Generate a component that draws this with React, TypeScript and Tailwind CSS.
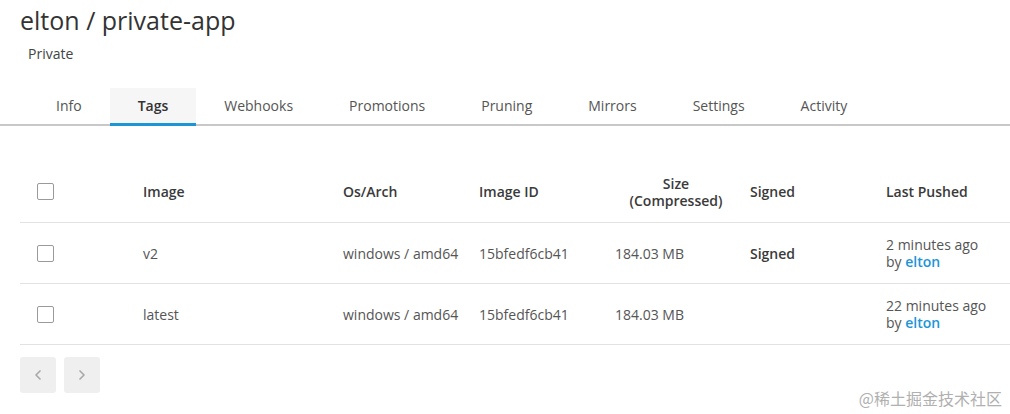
import { ChevronLeft, ChevronRight } from "lucide-react";

const TABS = ["Info", "Tags", "Webhooks", "Promotions", "Pruning", "Mirrors", "Settings", "Activity"];

type TagRow = {
  tag: string;
  osArch: string;
  imageId: string;
  size: string;
  signed: boolean;
  pushed: string;
  by: string;
};

const ROWS: TagRow[] = [
  { tag: "v2", osArch: "windows / amd64", imageId: "15bfedf6cb41", size: "184.03 MB", signed: true, pushed: "2 minutes ago", by: "elton" },
  { tag: "latest", osArch: "windows / amd64", imageId: "15bfedf6cb41", size: "184.03 MB", signed: false, pushed: "22 minutes ago", by: "elton" }
];

const gridCols = "grid grid-cols-[123px_200px_136px_136px_135px_136px_1fr] items-center";

function Checkbox() {
  return <span className="ml-[17px] block h-[17px] w-[17px] rounded-[2px] border border-[#9a9a9a] bg-white" />;
}

export default function App() {
  return (
    <div className="relative h-[414px] w-[1010px] overflow-hidden bg-white font-['Open_Sans',sans-serif] text-[#555]">
      <h1 className="pl-5 pt-[2px] text-[25px] leading-[36px] text-[#333]">elton / private-app</h1>
      <p className="mt-[6px] pl-7 text-[14px] leading-[20px] text-[#444]">Private</p>

      <div className="mt-[24px] flex border-b-2 border-[#c8c8c8] pl-7">
        {TABS.map((tab) => (
          <div
            key={tab}
            className={
              tab === "Tags"
                ? "-mb-[2px] border-b-[3px] border-[#1b95d8] bg-[#f6f6f6] px-7 pb-[5px] pt-[6px] text-[14px] font-semibold leading-[24px] text-[#333]"
                : "px-7 pb-[6px] pt-[6px] text-[14px] leading-[24px] text-[#555]"
            }
          >
            {tab}
          </div>
        ))}
      </div>

      <div className="ml-5 mt-[35px]">
        <div className={`${gridCols} h-[62px] border-b border-[#e2e2e2] text-[14px] font-semibold leading-[17px] text-[#3a3a3a]`}>
          <Checkbox />
          <span>Image</span>
          <span>Os/Arch</span>
          <span>Image ID</span>
          <span className="pr-[13px] text-center">Size<br />(Compressed)</span>
          <span>Signed</span>
          <span>Last Pushed</span>
        </div>
        {ROWS.map((row) => (
          <div key={row.tag} className={`${gridCols} h-[61px] border-b border-[#e2e2e2] text-[14px] leading-[17px]`}>
            <Checkbox />
            <span>{row.tag}</span>
            <span>{row.osArch}</span>
            <span>{row.imageId}</span>
            <span>{row.size}</span>
            <span className="font-semibold text-[#3a3a3a]">{row.signed ? "Signed" : ""}</span>
            <span>
              {row.pushed}
              <br />
              by <span className="font-semibold text-[#1b95d8]">{row.by}</span>
            </span>
          </div>
        ))}
      </div>

      <div className="ml-5 mt-[12px] flex gap-2">
        <button type="button" className="flex h-9 w-9 items-center justify-center rounded-[3px] bg-[#efefef] text-[#a8a8a8]">
          <ChevronLeft className="h-4 w-4" strokeWidth={2.5} />
        </button>
        <button type="button" className="flex h-9 w-9 items-center justify-center rounded-[3px] bg-[#efefef] text-[#a8a8a8]">
          <ChevronRight className="h-4 w-4" strokeWidth={2.5} />
        </button>
      </div>

      <span className="absolute bottom-[6px] right-[8px] font-['Noto_Sans_CJK_SC',sans-serif] text-[16px] leading-[20px] text-[#b0b0b0]">
        @稀土掘金技术社区
      </span>
    </div>
  );
}
